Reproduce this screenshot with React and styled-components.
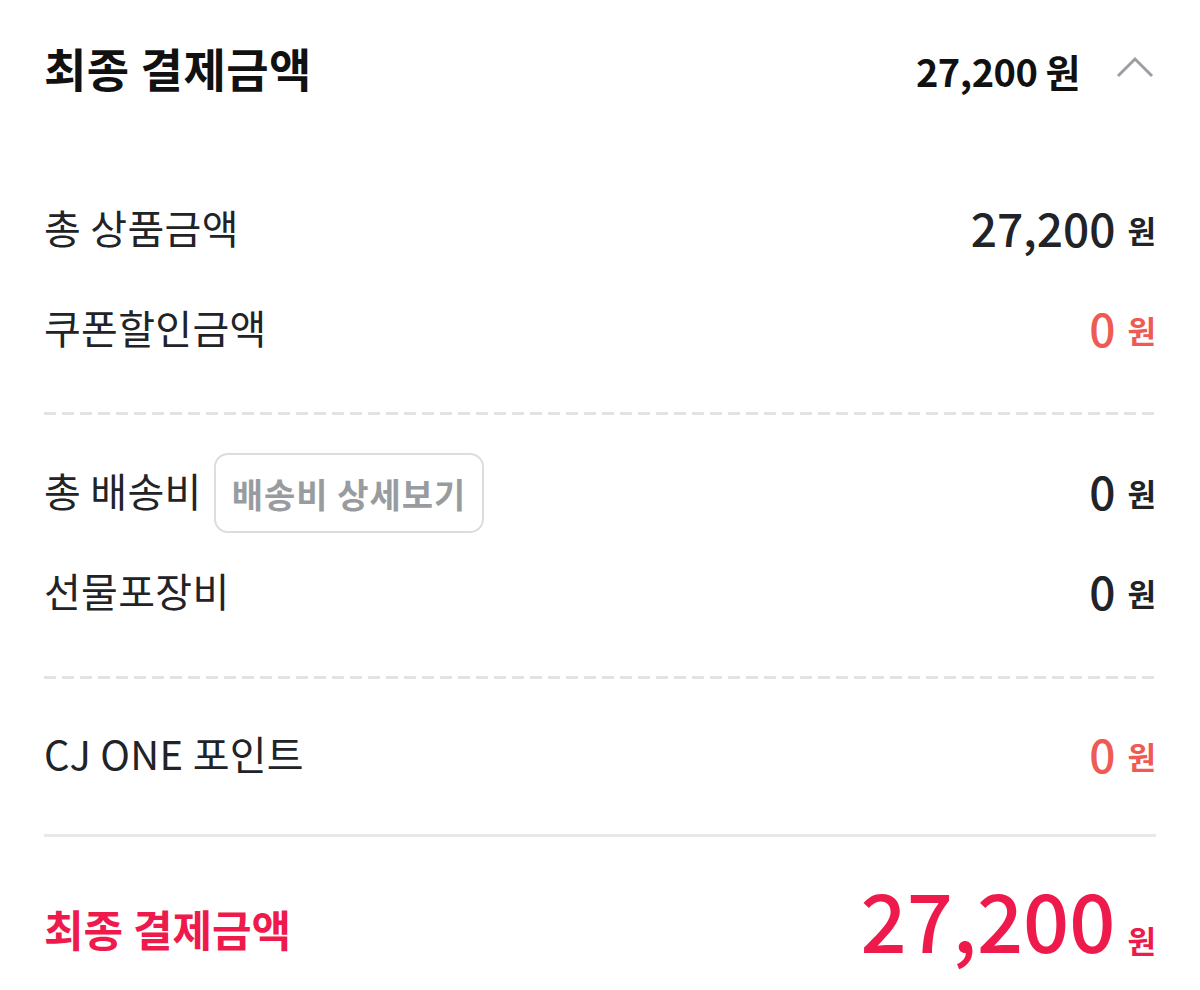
import React from 'react';
import styled, { createGlobalStyle } from 'styled-components';

const GlobalStyle = createGlobalStyle`
  * { box-sizing: border-box; }
  body {
    margin: 0;
    background: #ffffff;
    font-family: "Noto Sans CJK KR", "Noto Sans", sans-serif;
    color: #222327;
  }
`;

const rows = {
  products: [
    { label: '총 상품금액', value: '27,200', tone: 'dark' },
    { label: '쿠폰할인금액', value: '0', tone: 'coral' },
  ],
  delivery: [
    { label: '총 배송비', value: '0', tone: 'dark', button: '배송비 상세보기' },
    { label: '선물포장비', value: '0', tone: 'dark' },
  ],
  points: [{ label: 'CJ ONE 포인트', value: '0', tone: 'coral' }],
};

const tones = {
  dark: '#222327',
  coral: '#ef5a55',
  red: '#ee1a4b',
};

const Summary = () => (
  <Wrap>
    <GlobalStyle />
    <Header>
      <Title>최종 결제금액</Title>
      <HeaderTotal>
        <span>27,200 원</span>
        <svg width="38" height="22" viewBox="0 0 38 22" fill="none">
          <path d="M2 20 L19 3 L36 20" stroke="#9b9ea2" strokeWidth="3" />
        </svg>
      </HeaderTotal>
    </Header>

    <Section $top={40} $bottom={32}>
      {rows.products.map((r) => (
        <Row key={r.label}>
          <Label>{r.label}</Label>
          <Amount $tone={r.tone}>
            {r.value}
            <Unit>원</Unit>
          </Amount>
        </Row>
      ))}
    </Section>
    <Dashed />

    <Section $top={28} $bottom={33}>
      {rows.delivery.map((r) => (
        <Row key={r.label}>
          <LabelGroup>
            <Label>{r.label}</Label>
            {r.button ? <DetailButton type="button">{r.button}</DetailButton> : null}
          </LabelGroup>
          <Amount $tone={r.tone}>
            {r.value}
            <Unit>원</Unit>
          </Amount>
        </Row>
      ))}
    </Section>
    <Dashed />

    <Section $top={27} $bottom={28}>
      {rows.points.map((r) => (
        <Row key={r.label}>
          <Label>{r.label}</Label>
          <Amount $tone={r.tone}>
            {r.value}
            <Unit>원</Unit>
          </Amount>
        </Row>
      ))}
    </Section>
    <Solid />

    <FinalRow>
      <FinalLabel>최종 결제금액</FinalLabel>
      <FinalAmount>
        27,200
        <Unit>원</Unit>
      </FinalAmount>
    </FinalRow>
  </Wrap>
);

const Wrap = styled.main`
  width: 1200px;
  padding: 0 44px;
`;

const Header = styled.header`
  height: 140px;
  display: flex;
  align-items: center;
  justify-content: space-between;
`;

const Title = styled.h1`
  margin: 0 0 6px;
  font-size: 46px;
  font-weight: 700;
  color: #111111;
  letter-spacing: 0.5px;
`;

const HeaderTotal = styled.div`
  display: flex;
  align-items: center;
  gap: 36px;
  font-size: 38px;
  font-weight: 700;
  color: #111111;
  letter-spacing: -0.5px;
  svg { margin-right: 2px; margin-top: -6px; }
`;

const Section = styled.section`
  padding: ${(p) => p.$top}px 0 ${(p) => p.$bottom}px;
`;

const Row = styled.div`
  height: 100px;
  display: flex;
  align-items: center;
  justify-content: space-between;
`;

const LabelGroup = styled.div`
  display: flex;
  align-items: center;
  gap: 12px;
`;

const Label = styled.span`
  margin-bottom: 6px;
  font-size: 40px;
  font-weight: 400;
  color: #222327;
  letter-spacing: 0.3px;
`;

const DetailButton = styled.button`
  height: 80px;
  padding: 0 16px;
  border: 2px solid #dcdddf;
  border-radius: 14px;
  background: #ffffff;
  font-family: inherit;
  font-size: 34px;
  font-weight: 700;
  letter-spacing: 1px;
  color: #989ca1;
`;

const Amount = styled.span`
  display: flex;
  align-items: center;
  gap: 12px;
  margin-bottom: 6px;
  font-size: 46px;
  font-weight: 500;
  color: ${(p) => tones[p.$tone]};
`;

const Unit = styled.span`
  font-size: 31px;
  font-weight: 700;
  margin-top: 4px;
`;

const Dashed = styled.div`
  height: 3px;
  background-image: repeating-linear-gradient(
    to right,
    #e3e3e3 0,
    #e3e3e3 12px,
    transparent 12px,
    transparent 18px
  );
`;

const Solid = styled.div`
  height: 3px;
  background: #e8e8e8;
`;

const FinalRow = styled.div`
  margin-top: 34px;
  height: 120px;
  display: flex;
  align-items: center;
  justify-content: space-between;
`;

const FinalLabel = styled.span`
  margin-bottom: 6px;
  font-size: 43px;
  font-weight: 700;
  color: ${tones.red};
`;

const FinalAmount = styled.span`
  display: flex;
  align-items: baseline;
  gap: 12px;
  margin-bottom: 28px;
  font-size: 81px;
  font-weight: 500;
  color: ${tones.red};
`;

export default Summary;
